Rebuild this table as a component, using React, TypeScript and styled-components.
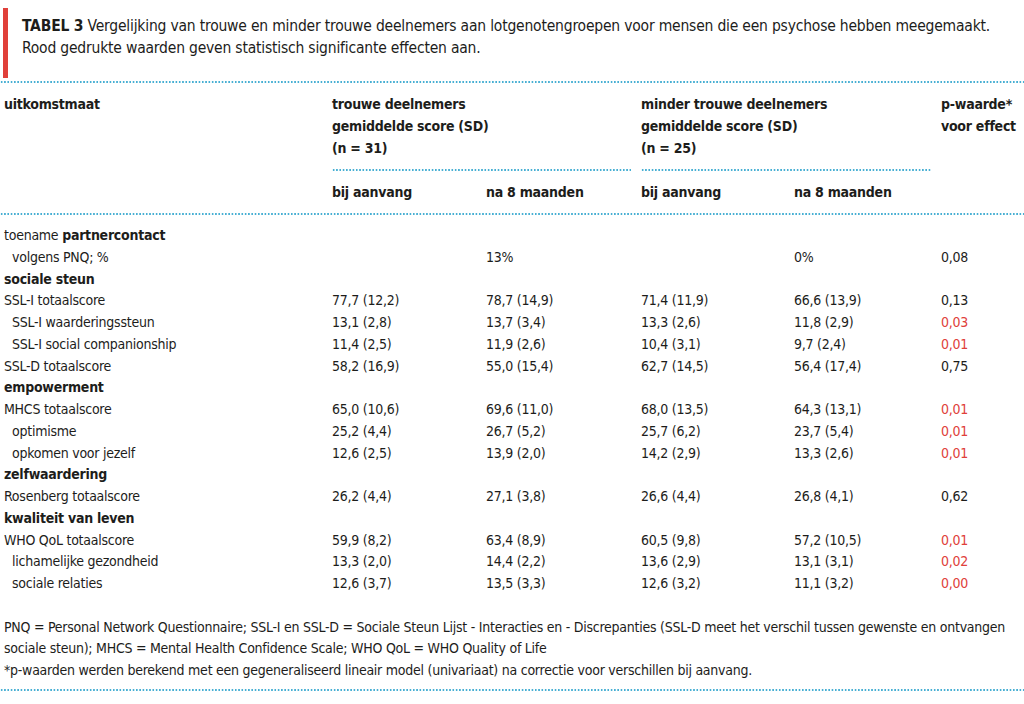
import styled, { createGlobalStyle } from "styled-components";

const GlobalStyle = createGlobalStyle`
  body {
    margin: 0;
    background: #ffffff;
    color: #1d1d1b;
    font-family: "Liberation Sans Narrow", "DejaVu Sans Condensed", "Liberation Sans", sans-serif;
    letter-spacing: -0.25px;
  }
`;

const dotted = `
  background-image: radial-gradient(circle, #47afd3 0.9px, transparent 1.1px);
  background-size: 3.3px 2px;
  background-repeat: repeat-x;
  height: 2px;
`;

const cols = "328px 154px 155px 153px 147px 1fr";

const Page = styled.div`
  width: 1024px;
  padding: 8px 0 0 0;
  box-sizing: border-box;
`;

const Caption = styled.div`
  display: flex;
  gap: 14px;
  padding-left: 3px;
`;

const RedBar = styled.div`
  width: 5px;
  height: 70px;
  background: #e0403a;
  flex-shrink: 0;
`;

const CaptionText = styled.p`
  margin: 7px 0 0 0;
  font-size: 15.5px;
  line-height: 22px;
  letter-spacing: -0.2px;
`;

const Line = styled.span`
  display: block;
  white-space: nowrap;
`;

const Strong = styled.b`
  font-weight: 700;
`;

const Rule = styled.div<{ $top?: number }>`
  ${dotted}
  width: 100%;
  margin-top: ${(p) => p.$top ?? 0}px;
`;

const HeadBlock = styled.div`
  display: grid;
  grid-template-columns: ${cols};
  padding: 10px 0 0 4px;
  font-size: 14px;
`;

const HeadCell = styled.div<{ $span?: number }>`
  font-weight: 700;
  line-height: 22px;
  white-space: nowrap;
  grid-column: span ${(p) => p.$span ?? 1};
`;

const GroupRule = styled.div<{ $span?: number }>`
  ${dotted}
  grid-column: span ${(p) => p.$span ?? 1};
  margin: 10px 10px 10px 0;
`;

const Spacer = styled.div``;

const Grid = styled.div`
  display: grid;
  grid-template-columns: ${cols};
  padding: 10px 0 0 4px;
  font-size: 14px;
  line-height: 21.75px;
`;

const Cell = styled.div<{ $red?: boolean; $indent?: boolean; $full?: boolean }>`
  color: ${(p) => (p.$red ? "#e0403a" : "inherit")};
  padding-left: ${(p) => (p.$indent ? "8px" : "0")};
  grid-column: ${(p) => (p.$full ? "1 / -1" : "auto")};
  white-space: nowrap;
`;

const Notes = styled.div`
  padding: 22px 0 8px 4px;
  font-size: 14px;
  line-height: 21.5px;
`;

type Row =
  | { kind: "section"; label: React.ReactNode }
  | { kind: "data"; label: string; indent?: boolean; v: string[]; p: string; red?: boolean };

const rows: Row[] = [
  {
    kind: "section",
    label: (
      <>
        toename <Strong>partnercontact</Strong>
      </>
    ),
  },
  { kind: "data", label: "volgens PNQ; %", indent: true, v: ["", "13%", "", "0%"], p: "0,08" },
  { kind: "section", label: <Strong>sociale steun</Strong> },
  { kind: "data", label: "SSL-I totaalscore", v: ["77,7 (12,2)", "78,7 (14,9)", "71,4 (11,9)", "66,6 (13,9)"], p: "0,13" },
  { kind: "data", label: "SSL-I waarderingssteun", indent: true, v: ["13,1 (2,8)", "13,7 (3,4)", "13,3 (2,6)", "11,8 (2,9)"], p: "0,03", red: true },
  { kind: "data", label: "SSL-I social companionship", indent: true, v: ["11,4 (2,5)", "11,9 (2,6)", "10,4 (3,1)", "9,7 (2,4)"], p: "0,01", red: true },
  { kind: "data", label: "SSL-D totaalscore", v: ["58,2 (16,9)", "55,0 (15,4)", "62,7 (14,5)", "56,4 (17,4)"], p: "0,75" },
  { kind: "section", label: <Strong>empowerment</Strong> },
  { kind: "data", label: "MHCS totaalscore", v: ["65,0 (10,6)", "69,6 (11,0)", "68,0 (13,5)", "64,3 (13,1)"], p: "0,01", red: true },
  { kind: "data", label: "optimisme", indent: true, v: ["25,2 (4,4)", "26,7 (5,2)", "25,7 (6,2)", "23,7 (5,4)"], p: "0,01", red: true },
  { kind: "data", label: "opkomen voor jezelf", indent: true, v: ["12,6 (2,5)", "13,9 (2,0)", "14,2 (2,9)", "13,3 (2,6)"], p: "0,01", red: true },
  { kind: "section", label: <Strong>zelfwaardering</Strong> },
  { kind: "data", label: "Rosenberg totaalscore", v: ["26,2 (4,4)", "27,1 (3,8)", "26,6 (4,4)", "26,8 (4,1)"], p: "0,62" },
  { kind: "section", label: <Strong>kwaliteit van leven</Strong> },
  { kind: "data", label: "WHO QoL totaalscore", v: ["59,9 (8,2)", "63,4 (8,9)", "60,5 (9,8)", "57,2 (10,5)"], p: "0,01", red: true },
  { kind: "data", label: "lichamelijke gezondheid", indent: true, v: ["13,3 (2,0)", "14,4 (2,2)", "13,6 (2,9)", "13,1 (3,1)"], p: "0,02", red: true },
  { kind: "data", label: "sociale relaties", indent: true, v: ["12,6 (3,7)", "13,5 (3,3)", "12,6 (3,2)", "11,1 (3,2)"], p: "0,00", red: true },
];

export default function App() {
  return (
    <Page>
      <GlobalStyle />
      <Caption>
        <RedBar />
        <CaptionText>
          <Line>
            <Strong>TABEL 3</Strong> Vergelijking van trouwe en minder trouwe deelnemers aan lotgenotengroepen voor
            mensen die een psychose hebben meegemaakt.
          </Line>
          <Line>Rood gedrukte waarden geven statistisch significante effecten aan.</Line>
        </CaptionText>
      </Caption>
      <Rule $top={3} />

      <HeadBlock>
        <HeadCell>uitkomstmaat</HeadCell>
        <HeadCell $span={2}>
          trouwe deelnemers
          <br />
          gemiddelde score (SD)
          <br />
          (n = 31)
        </HeadCell>
        <HeadCell $span={2}>
          minder trouwe deelnemers
          <br />
          gemiddelde score (SD)
          <br />
          (n = 25)
        </HeadCell>
        <HeadCell>
          p-waarde*
          <br />
          voor effect
        </HeadCell>
        <Spacer />
        <GroupRule $span={2} />
        <GroupRule $span={2} />
        <Spacer />
        <Spacer />
        <HeadCell>bij aanvang</HeadCell>
        <HeadCell>na 8 maanden</HeadCell>
        <HeadCell>bij aanvang</HeadCell>
        <HeadCell>na 8 maanden</HeadCell>
        <Spacer />
      </HeadBlock>
      <Rule $top={10} />

      <Grid>
        {rows.map((r, i) =>
          r.kind === "section" ? (
            <Cell key={i} $full>
              {r.label}
            </Cell>
          ) : (
            [
              <Cell key={`${i}l`} $indent={r.indent}>
                {r.label}
              </Cell>,
              ...r.v.map((v, j) => <Cell key={`${i}${j}`}>{v}</Cell>),
              <Cell key={`${i}p`} $red={r.red}>
                {r.p}
              </Cell>,
            ]
          )
        )}
      </Grid>

      <Notes>
        <Line>
          PNQ = Personal Network Questionnaire; SSL-I en SSL-D = Sociale Steun Lijst - Interacties en - Discrepanties
          (SSL-D meet het verschil tussen gewenste en ontvangen
        </Line>
        <Line>sociale steun); MHCS = Mental Health Confidence Scale; WHO QoL = WHO Quality of Life</Line>
        <Line>
          *p-waarden werden berekend met een gegeneraliseerd lineair model (univariaat) na correctie voor verschillen
          bij aanvang.
        </Line>
      </Notes>
      <Rule />
    </Page>
  );
}
